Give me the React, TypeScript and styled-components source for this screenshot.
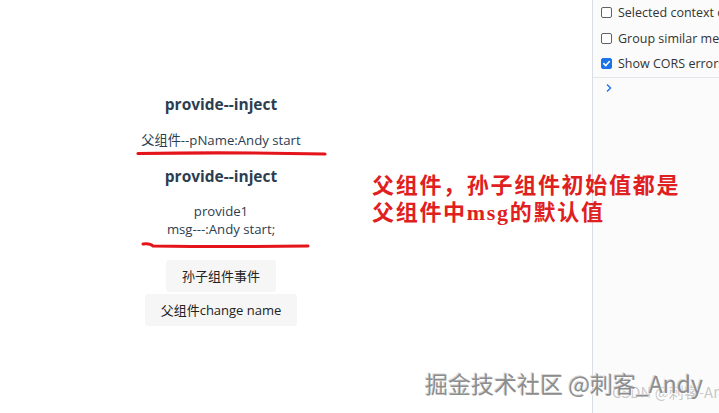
import React from "react";
import styled, { createGlobalStyle } from "styled-components";

const Global = createGlobalStyle`
  html, body { margin: 0; padding: 0; background: #ffffff; }
  body { width: 719px; height: 413px; overflow: hidden; }
`;

const Page = styled.div`
  position: relative;
  display: flex;
  width: 719px;
  height: 413px;
  overflow: hidden;
  font-family: "Open Sans", "Noto Sans CJK SC", sans-serif;
`;

const Main = styled.main`
  width: 592px;
  flex: none;
  box-sizing: border-box;
  padding-top: 92px;
`;

const Column = styled.div`
  width: 442px;
  display: flex;
  flex-direction: column;
  align-items: center;
  color: #2c3e50;
`;

const Title = styled.h3<{ $gap?: number }>`
  margin: ${(p) => p.$gap ?? 0}px 0 0;
  font-size: 15.5px;
  font-weight: 700;
  line-height: 24px;
  color: #2c3e50;
`;

const Line = styled.p<{ $gap?: number }>`
  margin: ${(p) => p.$gap ?? 0}px 0 0;
  font-size: 13.2px;
  line-height: 18px;
  color: #2c3e50;
`;

const Button = styled.button<{ $gap?: number }>`
  margin-top: ${(p) => p.$gap ?? 0}px;
  border: none;
  background: #f6f6f6;
  border-radius: 3px;
  height: 32px;
  padding: 0 16px;
  font-family: "Open Sans", "Noto Sans CJK SC", sans-serif;
  font-size: 13px;
  line-height: 16px;
  color: #222;
`;

const Panel = styled.aside`
  flex: 1;
  border-left: 1px solid #d9dde6;
  background: #fbfbfb;
  display: flex;
  flex-direction: column;
  overflow: hidden;
  font-family: "Open Sans", "Noto Sans", sans-serif;
`;

const Options = styled.div`
  display: flex;
  flex-direction: column;
  padding: 0 0 0 8px;
`;

const Option = styled.label`
  display: flex;
  align-items: center;
  gap: 6px;
  height: 25.5px;
  white-space: nowrap;
  font-size: 12.5px;
  color: #333;
`;

const Box = styled.span<{ $on?: boolean }>`
  width: 11px;
  height: 11px;
  flex: none;
  border-radius: 2px;
  box-sizing: border-box;
  border: 1px solid ${(p) => (p.$on ? "#1a73e8" : "#5f6368")};
  background: ${(p) => (p.$on ? "#1a73e8" : "#fff")};
  display: flex;
  align-items: center;
  justify-content: center;
`;

const Divider = styled.div`
  border-top: 1px solid #e3e5ea;
  display: flex;
  align-items: flex-start;
  padding: 5px 0 0 12px;
  height: 20px;
`;

const Annotation = styled.div`
  position: absolute;
  left: 372px;
  top: 172px;
  color: #e02020;
  font-family: "Liberation Serif", "Noto Sans CJK SC", serif;
  font-weight: 700;
  font-size: 22px;
  line-height: 27px;
  letter-spacing: 1.7px;
  white-space: nowrap;
`;

const Ink = styled.svg`
  position: absolute;
  left: 0;
  top: 0;
  pointer-events: none;
`;

const Watermark = styled.div`
  position: absolute;
  left: 425px;
  top: 368px;
  font-family: "Noto Sans CJK SC", sans-serif;
  font-size: 23px;
  line-height: 30px;
  color: #8d8d8d;
  text-shadow: 1px 1px 0 #ffffff, -1px -1px 0 #d8d8d8;
  white-space: nowrap;
`;

const SubMark = styled.div`
  position: absolute;
  left: 612px;
  top: 383px;
  font-family: "Noto Sans CJK SC", sans-serif;
  font-size: 15px;
  line-height: 18px;
  color: rgba(120, 120, 120, 0.4);
  white-space: nowrap;
`;

function Check() {
  return (
    <svg width="9" height="9" viewBox="0 0 10 10">
      <path d="M2 5.2 L4.2 7.3 L8.2 2.8" fill="none" stroke="#fff" strokeWidth="1.8" strokeLinecap="round" strokeLinejoin="round" />
    </svg>
  );
}

export default function App() {
  return (
    <>
      <Global />
      <Page>
        <Main>
          <Column>
            <Title>provide--inject</Title>
            <Line $gap={15}>父组件--pName:Andy start</Line>
            <Title $gap={15}>provide--inject</Title>
            <Line $gap={14}>provide1</Line>
            <Line>msg---:Andy start;</Line>
            <Button $gap={22}>孙子组件事件</Button>
            <Button $gap={2}>父组件change name</Button>
          </Column>
        </Main>
        <Panel>
          <Options>
            <Option>
              <Box />
              Selected context only
            </Option>
            <Option>
              <Box />
              Group similar messages in console
            </Option>
            <Option>
              <Box $on>
                <Check />
              </Box>
              Show CORS errors in console
            </Option>
          </Options>
          <Divider>
            <svg width="8" height="10" viewBox="0 0 8 10">
              <path d="M2 1.5 L5.5 5 L2 8.5" fill="none" stroke="#1a73e8" strokeWidth="1.4" />
            </svg>
          </Divider>
        </Panel>
        <Ink width="719" height="413" viewBox="0 0 719 413">
          <path d="M138 153.5 Q230 152 325 154" fill="none" stroke="#e4141b" strokeWidth="3.2" strokeLinecap="round" />
          <path d="M143 244 Q150 243 153 246 Q230 247 308 246" fill="none" stroke="#e4141b" strokeWidth="3" strokeLinecap="round" />
        </Ink>
        <Annotation>
          <div>父组件，孙子组件初始值都是</div>
          <div>父组件中msg的默认值</div>
        </Annotation>
        <SubMark>CSDN @刺客-Andy</SubMark>
        <Watermark>掘金技术社区 @刺客_Andy</Watermark>
      </Page>
    </>
  );
}
